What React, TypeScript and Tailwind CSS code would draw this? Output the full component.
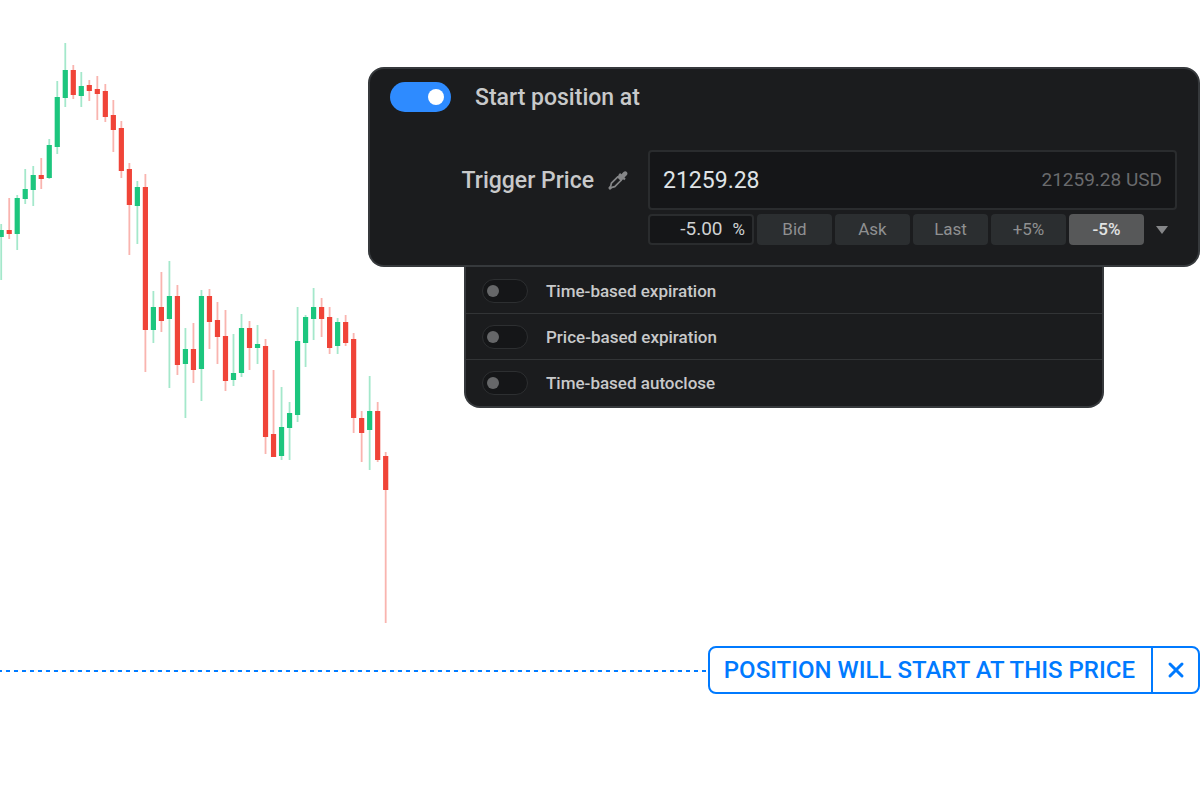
import React from 'react';
import { X } from 'lucide-react';

// [high, body top, body bottom, low, direction]
type Candle = [number, number, number, number, 'up' | 'down'];

const candles: Candle[] = [
  [224, 230, 237, 280, 'up'],
  [198, 230, 234, 239, 'down'],
  [195, 198, 234, 250, 'up'],
  [169, 189, 199, 204, 'up'],
  [166, 175, 190, 206, 'up'],
  [158, 175, 179, 189, 'down'],
  [139, 145, 178, 179, 'up'],
  [81, 97, 147, 154, 'up'],
  [43, 70, 98, 107, 'up'],
  [65, 70, 95, 99, 'down'],
  [72, 86, 96, 107, 'up'],
  [80, 85, 91, 101, 'down'],
  [76, 89, 94, 120, 'down'],
  [84, 91, 117, 122, 'down'],
  [100, 115, 130, 152, 'down'],
  [121, 128, 171, 178, 'down'],
  [163, 169, 205, 255, 'down'],
  [181, 187, 206, 244, 'up'],
  [174, 187, 330, 372, 'down'],
  [291, 307, 330, 343, 'up'],
  [272, 307, 321, 332, 'down'],
  [261, 296, 319, 388, 'up'],
  [285, 296, 365, 375, 'down'],
  [328, 349, 364, 418, 'up'],
  [323, 349, 370, 383, 'down'],
  [290, 296, 369, 401, 'up'],
  [289, 296, 322, 349, 'down'],
  [302, 320, 337, 364, 'down'],
  [310, 336, 381, 391, 'down'],
  [334, 373, 380, 386, 'up'],
  [314, 328, 373, 377, 'up'],
  [321, 328, 348, 370, 'down'],
  [325, 344, 348, 364, 'up'],
  [339, 346, 437, 454, 'down'],
  [370, 434, 457, 457, 'down'],
  [387, 427, 456, 460, 'up'],
  [402, 413, 428, 460, 'up'],
  [307, 341, 415, 422, 'up'],
  [315, 317, 343, 367, 'up'],
  [288, 307, 319, 340, 'up'],
  [298, 307, 319, 337, 'down'],
  [307, 317, 348, 354, 'down'],
  [318, 322, 346, 354, 'up'],
  [315, 322, 343, 346, 'down'],
  [333, 339, 418, 433, 'down'],
  [411, 418, 433, 462, 'down'],
  [376, 411, 430, 470, 'up'],
  [402, 411, 460, 462, 'down'],
  [452, 456, 490, 623, 'down'],
];

const presets = ['Bid', 'Ask', 'Last', '+5%', '-5%'];

const options = [
  { id: 'time-expiration', label: 'Time-based expiration' },
  { id: 'price-expiration', label: 'Price-based expiration' },
  { id: 'time-autoclose', label: 'Time-based autoclose' },
];

const CandleChart: React.FC = () => (
  <svg className="w-[392px] h-[646px] shrink-0" viewBox="0 0 392 646" role="img" aria-label="Price chart">
    {candles.map(([high, top, bottom, low, dir], i) => {
      const x = 1.2 + i * 8.01;
      const color = dir === 'up' ? '#1cc67e' : '#f04438';
      return (
        <g key={i} fill={color}>
          <rect x={x - 0.9} y={high} width={1.8} height={low - high} opacity={0.4} />
          <rect x={x - 2.6} y={top} width={5.2} height={bottom - top} />
        </g>
      );
    })}
  </svg>
);

const PipetteIcon: React.FC = () => (
  <svg className="w-5 h-5" viewBox="0 0 20 20" aria-hidden="true">
    <path
      d="M10.6 4.6l1.5-1.5 1.3 1.2 2.1-2.2c1-1 2.4-1 3.3-.1.9.9.9 2.3-.1 3.3l-2.2 2.1 1.2 1.3-1.5 1.5-1.1-1-2 2-4.3-4.3 2-2z"
      fill="#858688"
    />
    <path
      d="M10 6.6l-6.6 6.6-.7 2.9L1.2 18l.8.8 1.9-1.5 2.9-.7 6.6-6.6"
      fill="none"
      stroke="#858688"
      strokeWidth="1.7"
      strokeLinejoin="round"
    />
  </svg>
);

const App: React.FC = () => {
  return (
    <div className="min-h-screen bg-white overflow-x-hidden font-['Roboto',sans-serif]">
      <div className="flex">
        <CandleChart />

        {/* Order options */}
        <div className="flex-1 min-w-0 -ml-6 pt-[67px]">
          <section className="relative rounded-2xl border-2 border-[#36393c] bg-[#1b1c1e] pl-5 pr-[21px] pt-[13px] pb-5">
            <div className="flex items-center gap-6">
              <input
                id="start-position"
                type="checkbox"
                role="switch"
                defaultChecked
                className="flex h-[30px] w-[61px] appearance-none items-center justify-end rounded-full bg-[#2e8bff] pr-[7px] before:size-4 before:rounded-full before:bg-white"
              />
              <label htmlFor="start-position" className="pt-[2px] text-[23px] leading-7 font-medium text-[#c8c9ca]">
                Start position at
              </label>
            </div>

            <div className="mt-[38px] flex">
              <div className="flex h-[60px] w-[258px] shrink-0 items-center justify-end gap-[14px] pr-5">
                <label htmlFor="trigger-price" className="pt-[2px] text-[23px] leading-7 font-medium text-[#c8c9ca]">
                  Trigger Price
                </label>
                <PipetteIcon />
              </div>

              <div className="min-w-0 flex-1">
                <div className="flex h-[60px] items-center rounded-sm border-2 border-[#2a2c2e] bg-[#151618] px-[13px]">
                  <input
                    id="trigger-price"
                    type="text"
                    defaultValue="21259.28"
                    className="min-w-0 flex-1 bg-transparent pt-[2px] text-[23px] leading-7 text-[#dfe3e6]"
                  />
                  <span className="text-[19px] text-[#6a6b6d]">21259.28 USD</span>
                </div>

                <div className="mt-1 flex h-[31px] gap-[3px]">
                  <div className="flex w-[106px] items-center rounded-sm border-2 border-[#2a2c2e] bg-[#151618] pr-[7px] text-[#cfd1d2]">
                    <input
                      type="text"
                      aria-label="Price offset"
                      defaultValue="-5.00"
                      className="min-w-0 flex-1 bg-transparent text-right text-[19px]"
                    />
                    <span className="pl-[10px] text-[17px]">%</span>
                  </div>
                  {presets.map((preset) => (
                    <button
                      key={preset}
                      type="button"
                      className={
                        preset === '-5%'
                          ? 'w-[75px] rounded-sm bg-[#575859] text-[17px] font-medium text-[#e2e3e3]'
                          : 'w-[75px] rounded-sm bg-[#2b2e30] text-[17px] text-[#8f9091]'
                      }
                    >
                      {preset}
                    </button>
                  ))}
                  <button type="button" aria-label="More presets" className="flex flex-1 items-center justify-center">
                    <svg className="w-3 h-2" viewBox="0 0 12 8" aria-hidden="true">
                      <path d="M0 0h12L6 8z" fill="#858688" />
                    </svg>
                  </button>
                </div>
              </div>
            </div>
          </section>

          <section className="mx-24 rounded-b-2xl border-2 border-t-0 border-[#36393c] bg-[#1b1c1e] pt-px">
            {options.map((option) => (
              <div key={option.id} className="flex h-[46px] items-center gap-[18px] border-b border-[#323436] px-4 last:border-b-0">
                <input
                  id={option.id}
                  type="checkbox"
                  role="switch"
                  className="flex h-6 w-[46px] appearance-none items-center rounded-full border border-[#2d2f31] bg-[#151618] pl-1 before:size-3 before:rounded-full before:bg-[#666769]"
                />
                <label htmlFor={option.id} className="text-[17px] leading-6 font-medium text-[#c8c9ca]">
                  {option.label}
                </label>
              </div>
            ))}
          </section>
        </div>
      </div>

      {/* Price line */}
      <div className="flex items-center">
        <div className="mt-[2px] h-[2px] flex-1 bg-[repeating-linear-gradient(to_right,#007aff_0_2px,transparent_2px_6px,#007aff_6px_8px)]" />
        <div className="flex h-12 rounded-lg border-2 border-[#007aff] text-[#007aff]">
          <span className="pl-[14px] pr-4 text-2xl leading-[44px] font-medium whitespace-nowrap">
            POSITION WILL START AT THIS PRICE
          </span>
          <button type="button" aria-label="Cancel" className="flex w-[47px] items-center justify-center border-l-2 border-[#007aff]">
            <X className="w-6 h-6" strokeWidth={3} />
          </button>
        </div>
      </div>
    </div>
  );
};

export default App;
